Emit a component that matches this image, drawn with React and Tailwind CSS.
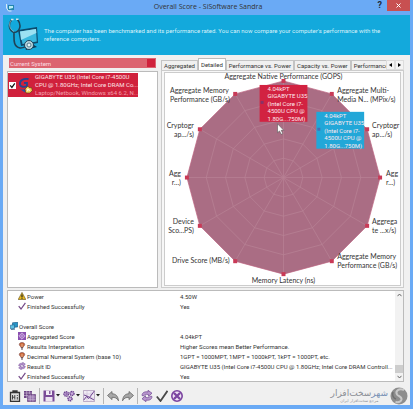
import React from 'react';

const tabs = ['Aggregated', 'Detailed', 'Performance vs. Power', 'Capacity vs. Power', 'Performance v'];

const axisLabels = [
  { x: 119, y: 6, anchor: 'middle', lines: ['Aggregate Native Performance (GOPS)'] },
  { x: 173, y: 20, anchor: 'start', lines: ['Aggregate Multi-', 'Media N... (MPix/s)'] },
  { x: 208, y: 55, anchor: 'start', lines: ['Cryptogr', 'ap.../s)'] },
  { x: 222, y: 103, anchor: 'start', lines: ['Agg', 'r...)'] },
  { x: 208, y: 152, anchor: 'start', lines: ['Aggrega', 'te ...x/s)'] },
  { x: 173, y: 187, anchor: 'start', lines: ['Aggregate Memory', 'Performance (GB/s)'] },
  { x: 119, y: 211, anchor: 'middle', lines: ['Memory Latency (ns)'] },
  { x: 65, y: 191, anchor: 'end', lines: ['Drive Score (MB/s)'] },
  { x: 29, y: 152, anchor: 'end', lines: ['Device', 'Sco...PS)'] },
  { x: 16, y: 103, anchor: 'end', lines: ['Agg', 'r...)'] },
  { x: 29, y: 55, anchor: 'end', lines: ['Cryptogr', 'ap.../s)'] },
  { x: 5, y: 20, anchor: 'start', lines: ['Aggregate Memory', 'Performance (GB/s)'] },
];

const tipLines = ['4.04kPT', 'GIGABYTE U35', '(Intel Core i7-', '4500U CPU @', '1.80G...750M)'];

const ring = (radius) =>
  Array.from({ length: 12 }, (_, i) => {
    const angle = (i * Math.PI) / 6;
    return [119 + radius * Math.sin(angle), 105 - radius * Math.cos(angle)];
  });

const toPoints = (points) => points.map((p) => p.join(',')).join(' ');

const ChartTip = ({ x, y, fill, dot }) => (
  <g className="font-[Roboto,sans-serif]">
    <rect x={x} y={y} width="48" height="37" fill={fill} />
    <rect x={x + 1} y={y + 16} width="3" height="3" fill={dot} />
    {tipLines.map((line, i) => (
      <text key={line} x={x + 8} y={y + 6 + i * 7.5} fontSize="6" fill="#ffe9ef">{line}</text>
    ))}
  </g>
);

const RadarChart = () => (
  <svg viewBox="0 0 236 213" className="block h-auto w-full font-[Lato,sans-serif]" fontSize="7" fill="#333">
    <polygon points={toPoints(ring(97))} fill="#aa6d84" stroke="#bd6480" strokeWidth="0.7" />
    {[19.4, 38.8, 58.2, 77.6].map((r) => (
      <polygon key={r} points={toPoints(ring(r))} fill="none" stroke="#b98396" strokeWidth="0.7" />
    ))}
    {ring(97).map(([x, y], i) => (
      <g key={i}>
        <line x1="119" y1="105" x2={x} y2={y} stroke="#b98396" strokeWidth="0.7" />
        <rect x={x - 2} y={y - 2} width="4" height="4" fill="#c93a57" />
      </g>
    ))}
    {axisLabels.map(({ x, y, anchor, lines }, i) => (
      <text key={i} textAnchor={anchor}>
        {lines.map((line, n) => (
          <tspan key={line} x={x} y={y + n * 9}>{line}</tspan>
        ))}
      </text>
    ))}
    <ChartTip x={95} y={12} fill="#d22241" dot="#8a3166" />
    <ChartTip x={152} y={39} fill="#22a7d8" dot="#4471b4" />
    {/* Mouse pointer */}
    <path d="M113 51v9l2-1.8 1.7 3.4 1.6-.8-1.6-3.2h2.600z" fill="#fff" stroke="#555" strokeWidth="0.6" />
  </svg>
);

const WarningIcon = () => (
  <svg viewBox="0 0 8 8" className="h-2 w-2 shrink-0">
    <path d="M4 .4 7.8 7.5H.2z" fill="#e8b91c" stroke="#5d4a16" strokeWidth=".6" />
    <path d="M4 2.4v2.8M4 5.8v.9" stroke="#222" strokeWidth="1.2" />
  </svg>
);

const CheckIcon = () => (
  <svg viewBox="0 0 8 8" className="h-2 w-2 shrink-0">
    <path d="M.7 4.2 3 7 7.4.8" fill="none" stroke="#744a88" strokeWidth="1.2" />
  </svg>
);

const MonitorIcon = () => (
  <svg viewBox="0 0 8 8" className="h-2 w-2 shrink-0">
    <path d="M2.5.8 7.8.3v4.6L2.5 5.4z" fill="#2795c7" stroke="#164e7a" strokeWidth=".6" />
    <path d="M.4 3.2 4.5 2.8v3.6L.4 6.8z" fill="#5fc1e4" stroke="#1d5e8c" strokeWidth=".6" />
    <path d="M1 7.6 5 7.2" stroke="#164e7a" strokeWidth=".7" />
  </svg>
);

const ScoreIcon = () => (
  <svg viewBox="0 0 8 8" className="h-2 w-2 shrink-0">
    <rect width="8" height="8" fill="#8a4fb0" />
    <path d="M4 .8 7.2 4 4 7.2.8 4z" fill="none" stroke="#e3cdf0" strokeWidth=".8" />
    <circle cx="4" cy="4" r="1.2" fill="none" stroke="#e3cdf0" strokeWidth=".7" />
  </svg>
);

const HintIcon = () => (
  <svg viewBox="0 0 8 8" className="h-2 w-2 shrink-0">
    <path d="M4 .4C2.4.4 1.3 1.3 1.3 2.6c0 1.2 1.3 1.5 1.6 2.8h2.2c.3-1.3 1.6-1.6 1.6-2.8C6.700 1.300 5.600.4 4 .4z" fill="#c9683c" stroke="#633" strokeWidth=".5" />
    <path d="M4 2v3" stroke="#f3c7a0" strokeWidth=".8" />
    <path d="M3 6h2M3.400 7.300h1.200" stroke="#3d3040" strokeWidth=".9" />
  </svg>
);

const SyncIcon = ({ className }) => (
  <svg viewBox="0 0 12 12" className={className}>
    <path d="M1 5.500C1 2.500 4 1.200 7 2V.3l4 2.900L7.500 6.300V4.600C5 4 3.500 4.500 2.500 6z" fill="#b795cd" stroke="#6d4390" strokeWidth=".7" />
    <path d="M11 6.500c0 3-3 4.300-6 3.500v1.700L1 8.800l3.500-3.100v1.700c2.500.6 4 .1 5-1.400z" fill="#b795cd" stroke="#6d4390" strokeWidth=".7" />
  </svg>
);

const results = [
  { icon: <WarningIcon />, name: 'Power', value: '4.50W' },
  { icon: <CheckIcon />, name: 'Finished Successfully', value: 'Yes' },
  null,
  { icon: <MonitorIcon />, name: 'Overall Score', heading: true },
  { icon: <ScoreIcon />, name: 'Aggregated Score', value: '4.04kPT' },
  { icon: <HintIcon />, name: 'Results Interpretation', value: 'Higher Scores mean Better Performance.' },
  { icon: <HintIcon />, name: 'Decimal Numeral System (base 10)', value: '1GPT = 1000MPT, 1MPT = 1000kPT, 1kPT = 1000PT, etc.' },
  { icon: <SyncIcon className="h-2 w-2 shrink-0" />, name: 'Result ID', value: 'GIGABYTE U35 (Intel Core i7-4500U CPU @ 1.80GHz; Intel Core DRAM Controll...' },
  { icon: <CheckIcon />, name: 'Finished Successfully', value: 'Yes' },
];

const BannerArt = () => (
  <svg viewBox="0 0 32 34" className="w-8 shrink-0">
    <path d="M10 12 29 9l1 16-17 3z" fill="#0c4a6c" />
    <path d="M12 13.500 28 11l.8 12.500L14.500 26z" fill="#38b8de" />
    <path d="M12 13.500 28 11l.3 4L13 22z" fill="#9be1f2" />
    <path d="m17 29 9-2 3 2-11 3z" fill="#0b3a57" />
    <path d="M3.500 2C0 6 1 13 6 14.500 12 14 14 7 9.500 1.500M6 14.500c0 7-1 14 6 15.500 3 .3 5-1 7-3" fill="none" stroke="#1f4357" strokeWidth="1.600" />
    <path d="M3 2.500C.3 6 1.500 11.500 6 13.500" fill="none" stroke="#b9d6df" strokeWidth=".6" />
    <path d="M3 1.500h2.500M8 1.200h2.500" stroke="#cfe4ea" strokeWidth="1.500" />
    <circle cx="21" cy="27" r="4.500" fill="#b6d5de" stroke="#18455e" strokeWidth="1" />
    <circle cx="21" cy="27" r="2" fill="#e7f5f8" stroke="#32657b" strokeWidth=".8" />
  </svg>
);

const SystemIcon = () => (
  <svg viewBox="0 0 15 17" className="w-[15px] shrink-0">
    <path d="M10.500 2C5 1 1.500 4 2 7.500c.5 2.500 4 3 7 1.500V6H6" fill="none" stroke="#26448f" strokeWidth="1.800" />
    <path d="M1 11.500c4 2 6 1 7-1l-1 5z" fill="#314f98" />
    <path d="m7 12 3-3 1.500 2 2-.5.8 3-2.300 2.500H8z" fill="#f3d25a" stroke="#53340f" strokeWidth=".6" />
    <path d="m9 12 3 1.500M9 14.500l2-3" stroke="#fff" strokeWidth=".9" />
  </svg>
);

const ToolButton = ({ label, menu, children }) => (
  <button aria-label={label} className="flex items-center gap-px">
    <svg viewBox="0 0 12 12" className="h-3 w-3">{children}</svg>
    {menu && (
      <svg viewBox="0 0 4 3" className="h-[3px] w-1"><path d="M0 0h4L2 2.500z" fill="#222" /></svg>
    )}
  </button>
);

const Separator = () => <span className="h-4 w-px bg-[#b5b5b5]" />;

const Toolbar = () => (
  <div className="flex items-center gap-[3px]">
    <ToolButton label="Report">
      <path d="M1.500 2.500h9v9h-9zM4 2.500V1h4v1.500" fill="#ddd" stroke="#333" strokeWidth="1.300" />
      <path d="M3.500 5v4.500M3.500 7.200h2.300M5.800 5v4.500M8.300 7v2.500M8.300 5v1" stroke="#333" strokeWidth=".9" />
    </ToolButton>
    <ToolButton label="Copy">
      <path d="M0 1h8v7H0z" fill="#6d4585" />
      <path d="M3.500 4.500h8v7h-8z" fill="#8f6aa7" stroke="#64407a" strokeWidth=".7" />
      <path d="M0 3h8M0 5.500h4M2.700 1v7M5.400 1v3M3.500 7h8M3.500 9.300h8M6.200 4.500v7M8.900 4.500v7" stroke="#d3c3dc" strokeWidth=".6" />
    </ToolButton>
    <Separator />
    <ToolButton label="Save" menu>
      <path d="M.5.500h11v11H.5z" fill="#7a4b97" />
      <path d="M3 .5h6v4.500H3z" fill="#f2edf5" />
      <path d="M6.800 1v3" stroke="#6a3d87" strokeWidth="1.200" />
      <path d="M2.500 7h7v4.500h-7z" fill="#ece5f0" />
    </ToolButton>
    <ToolButton label="Options" menu>
      <circle cx="3.200" cy="4" r="2.200" fill="#c9addc" stroke="#6d4390" strokeWidth="1.500" strokeDasharray="1.300 .5" />
      <circle cx="9" cy="3.500" r="2" fill="#c9addc" stroke="#6d4390" strokeWidth="1.500" strokeDasharray="1.300 .5" />
      <circle cx="7" cy="8.800" r="2" fill="#c9addc" stroke="#6d4390" strokeWidth="1.500" strokeDasharray="1.300 .5" />
      <circle cx="3.200" cy="4" r=".8" fill="#6d4390" />
    </ToolButton>
    <ToolButton label="Chart" menu>
      <path d="M.5.500h11v11H.5z" fill="#f0eaf4" stroke="#9b82aa" strokeWidth=".6" />
      <path d="M.5 4h11M.5 8h11M4 .5v11M8 .5v11" stroke="#c5b4d0" strokeWidth=".5" />
      <path d="m.8 10 2.700-3.500 2.200 2L11.300 1M1 5l4 1.500L11 10" fill="none" stroke="#6d4390" strokeWidth="1" />
    </ToolButton>
    <Separator />
    <ToolButton label="Undo">
      <path d="M5 1.500v2.300c4 0 6 2.500 6.500 7C10 8 8 7.300 5 7.300v2.300L.5 5.500z" fill="#a7a7a7" stroke="#666" strokeWidth=".8" />
    </ToolButton>
    <ToolButton label="Redo">
      <path d="M7 1.500v2.300c-4 0-6 2.500-6.500 7C2 8 4 7.300 7 7.300v2.300l4.500-4.100z" fill="#a7a7a7" stroke="#666" strokeWidth=".8" />
    </ToolButton>
    <Separator />
    <button aria-label="Refresh"><SyncIcon className="h-3 w-3" /></button>
    <ToolButton label="OK">
      <path d="M.8 6.500 4.500 11 11.500.8" fill="none" stroke="#484848" strokeWidth="1.800" />
    </ToolButton>
    <ToolButton label="Cancel">
      <circle cx="6" cy="6" r="5.200" fill="#efe4f5" stroke="#7b45a0" strokeWidth="1.600" />
      <path d="m3 3 6 6M9 3 3 9" stroke="#7b45a0" strokeWidth="2.400" />
    </ToolButton>
  </div>
);

const SiteLogo = () => (
  <div className="-mr-1 flex items-center gap-[2px]">
    <div dir="rtl" className="text-center font-['DejaVu_Sans',sans-serif] text-[#8b8f96]">
      <div className="text-[9px] leading-[10px]">
        <span className="text-[#7891b5]">شهر</span>سخت‌افزار
      </div>
      <div className="text-[4px] leading-[5px]">مرجع سخت‌افزار ایران</div>
    </div>
    <svg viewBox="0 0 18 18" className="h-[18px] w-[18px]">
      <circle cx="9" cy="9" r="8.500" fill="#8d8d8d" />
      <path d="M14 3C9 1 5 4 7 7.500c1.500 2 5 2 4.500 5-.5 2-3 3-6 2.500" fill="none" stroke="#c9c9c9" strokeWidth="2" />
      <path d="M3 5c-1 3 0 6 3 7" fill="none" stroke="#6f6f6f" strokeWidth="1.500" />
    </svg>
  </div>
);

const App = () => {
  return (
    <div className="flex min-h-screen flex-col bg-[#6aaaf5] px-[3px] pb-1 font-[Roboto,sans-serif] text-[6px] text-[#333]">
      {/* Title bar */}
      <header className="flex h-[15px] items-center">
        <div className="flex-1 pl-[3px]">
          <svg viewBox="0 0 8 8" className="h-2 w-2">
            <path d="M2 1h6v5H2z" fill="#2486ad" />
            <path d="M3 2h4v2L3 5z" fill="#b7edf5" />
            <path d="M.5 0v4l2 3h3" fill="none" stroke="#d2eef5" strokeWidth="1" />
          </svg>
        </div>
        <h1 className="font-['Open_Sans',sans-serif] text-[7px]">Overall Score - SiSoftware Sandra</h1>
        <div className="flex flex-1 items-start justify-end gap-1 self-stretch">
          <button aria-label="Help" className="px-px text-[9px] leading-[11px] font-bold text-[#1b2b40]">?</button>
          <button aria-label="Close" className="flex h-[11px] w-[23px] items-center justify-center bg-[#c85051]">
            <svg viewBox="0 0 5 5" className="h-[5px] w-[5px]"><path d="m.5.500 4 4m0-4-4 4" stroke="#fff" strokeWidth="1" /></svg>
          </button>
        </div>
      </header>

      {/* Banner */}
      <div className="flex h-10 items-center gap-1 bg-[#13a9dc] px-[5px] text-[#d8f1fa]">
        <BannerArt />
        <p className="pr-3 leading-2">
          The computer has been benchmarked and its performance rated. You can now compare your computer's performance with the reference computers.
        </p>
      </div>

      <main className="flex flex-1 flex-col bg-[#f0f0f0] pt-[3px] pr-[6px] pl-1">
        <div className="grid grid-cols-[151fr_243fr] gap-[3px]">
          {/* Systems */}
          <section className="flex flex-col gap-[3px]">
            <div className="mx-[2px] flex h-[10px] items-center justify-between bg-[#dc6470] px-px text-[#fbdde2]">
              <h2>Current System</h2>
              <span className="h-2 w-2 bg-[#d0213c]" />
            </div>
            <div className="flex-1 border border-[#bbb] bg-white pt-px">
              <label className="flex w-[130px] items-center gap-[2px] bg-[#d0213c] text-[#fde3e7]">
                <span className="relative ml-px flex shrink-0">
                  <input type="checkbox" defaultChecked className="peer h-[7px] w-[7px] appearance-none bg-white" />
                  <svg viewBox="0 0 7 7" className="pointer-events-none absolute inset-0 hidden peer-checked:block">
                    <path d="m1.200 3.400 1.700 2L5.800 1.300" fill="none" stroke="#111" strokeWidth="1.200" />
                  </svg>
                </span>
                <SystemIcon />
                <span className="leading-2 whitespace-nowrap">
                  <span className="block">GIGABYTE U35 (Intel Core i7-4500U</span>
                  <span className="block">CPU @ 1.80GHz; Intel Core DRAM Co...</span>
                  <span className="block text-[#f0a0ad]">Laptop/Netbook, Windows x64 6.2, N...</span>
                </span>
              </label>
            </div>
          </section>

          {/* Chart */}
          <section className="min-w-0">
            <div className="flex h-3 items-end">
              <div className="flex min-w-0 flex-1 items-end overflow-hidden">
                {tabs.map((tab) => (
                  <button
                    key={tab}
                    className={
                      tab === 'Detailed'
                        ? 'h-3 shrink-0 border border-b-0 border-[#bbb] bg-white px-[2px] leading-[10px]'
                        : 'h-[10px] shrink-0 border border-b-0 border-[#c4c4c4] px-[2px] leading-[9px]'
                    }
                  >
                    {tab}
                  </button>
                ))}
              </div>
              <button aria-label="Scroll left" className="flex h-[10px] w-[9px] items-center justify-center border border-[#ddd] bg-[#f4f4f4]">
                <svg viewBox="0 0 3 4" className="h-1 w-[3px]"><path d="M3 0v4L0 2z" /></svg>
              </button>
              <button aria-label="Scroll right" className="flex h-[10px] w-[9px] items-center justify-center border border-[#ddd] bg-[#f4f4f4]">
                <svg viewBox="0 0 3 4" className="h-1 w-[3px]"><path d="M0 0v4l3-2z" /></svg>
              </button>
            </div>
            <div className="border border-[#ccc] bg-[#f7f7f7] px-[2px] py-px">
              <div className="border border-[#ccc] bg-white">
                <RadarChart />
              </div>
            </div>
          </section>
        </div>

        {/* Results */}
        <div className="mt-[2px] flex border border-[#bbb] bg-white">
          <div className="min-w-0 flex-1">
            <table className="w-full table-fixed">
              <tbody>
                {results.map((row, i) => (
                  <tr key={i} className="h-[10px] leading-[9px] whitespace-nowrap">
                    <td className="w-[172px] p-0">
                      {row && (
                        <div className={row.heading ? 'flex items-center gap-px pl-[2px]' : 'flex items-center gap-px pl-[10px]'}>
                          {row.icon}
                          {row.name}
                        </div>
                      )}
                    </td>
                    <td className="p-0">{row && row.value}</td>
                  </tr>
                ))}
              </tbody>
            </table>
          </div>
          <div className="flex w-2 flex-col items-center justify-between bg-[#f2f2f2] py-[2px]">
            <svg viewBox="0 0 5 4" className="w-[5px]"><path d="M.5 3.200 2.500 1l2 2.200" fill="none" stroke="#666" /></svg>
            <div className="flex w-full flex-1 flex-col justify-end pb-[2px]">
              <div className="h-2 bg-[#cdcdcd]" />
            </div>
            <svg viewBox="0 0 5 4" className="w-[5px]"><path d="M.5.800 2.500 3l2-2.200" fill="none" stroke="#666" /></svg>
          </div>
        </div>

        {/* Toolbar */}
        <footer className="flex flex-1 items-center justify-between pt-1 pl-[2px]">
          <Toolbar />
          <SiteLogo />
        </footer>
      </main>
    </div>
  );
};

export default App;
